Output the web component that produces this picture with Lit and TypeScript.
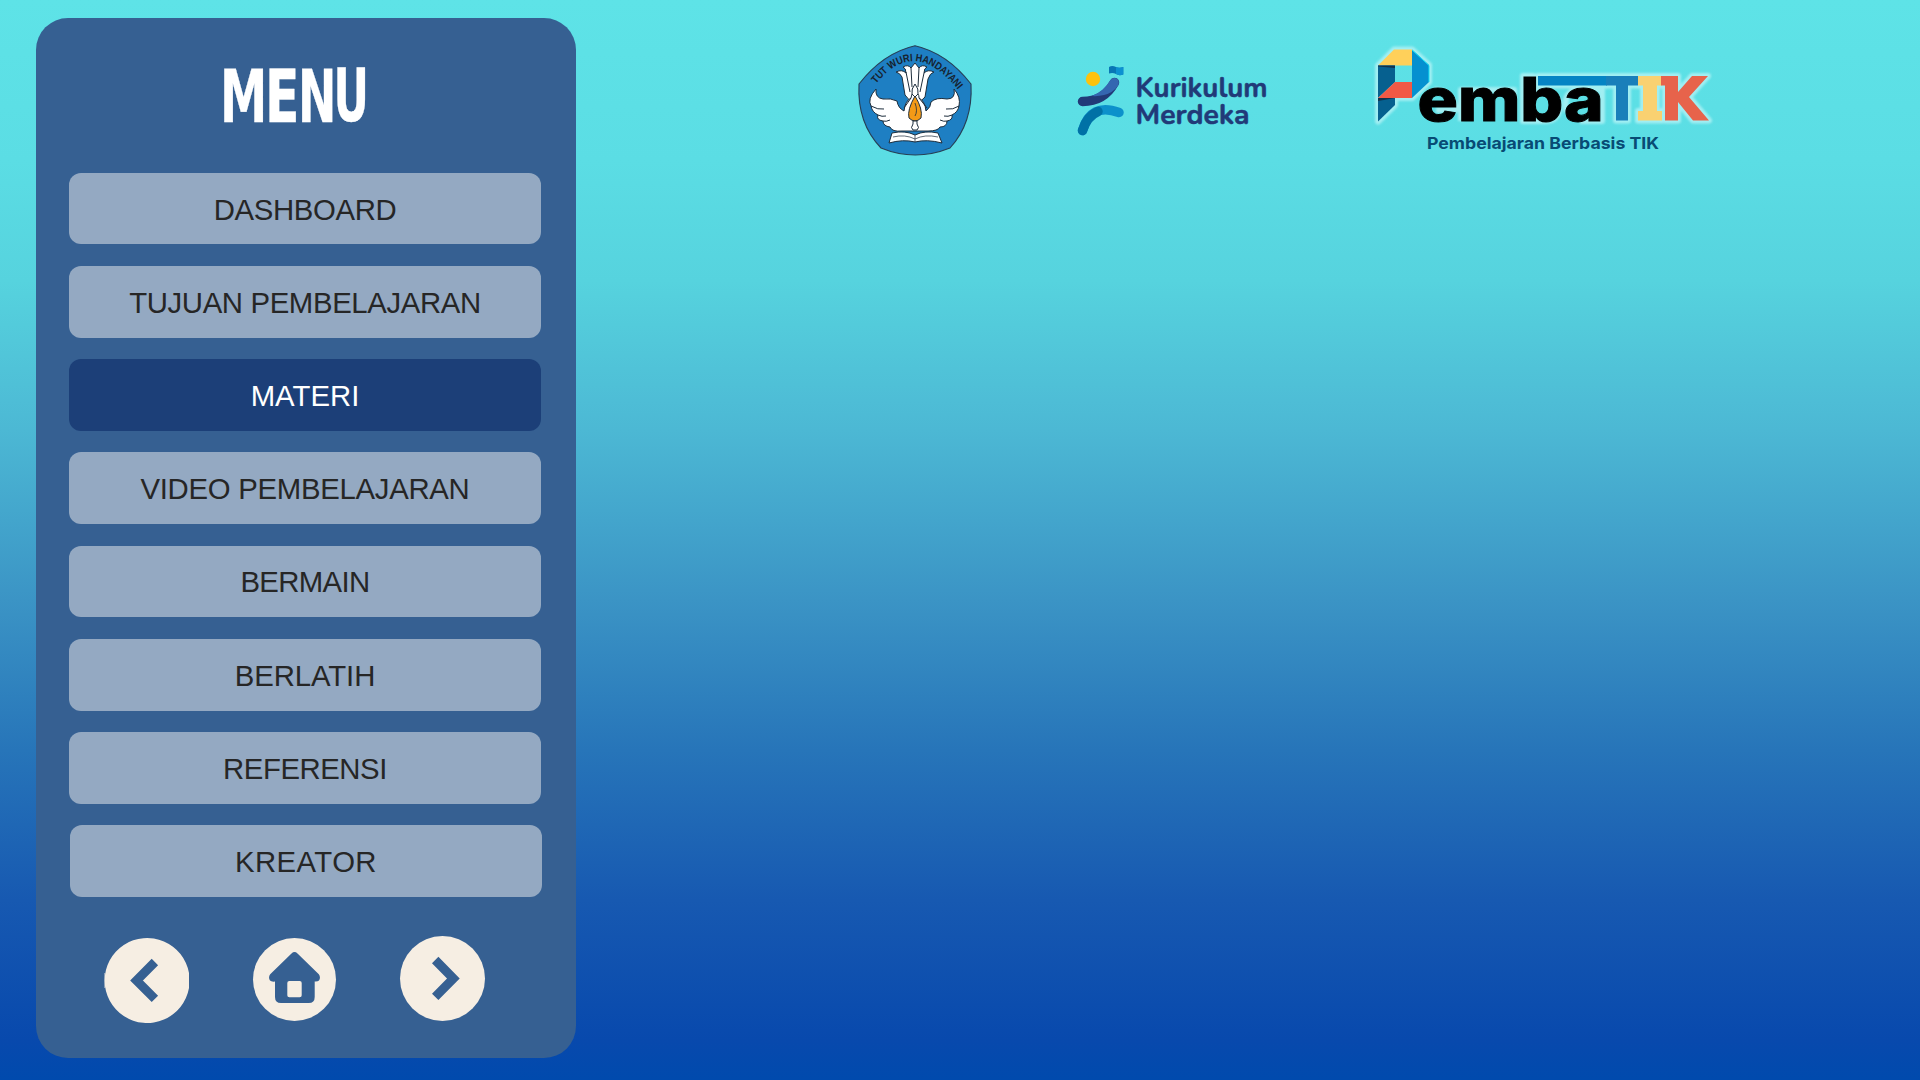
import { LitElement, html, css, svg } from "lit";
import { customElement } from "lit/decorators.js";
import { classMap } from "lit/directives/class-map.js";
import { styleMap } from "lit/directives/style-map.js";

interface MenuItem {
  label: string;
  tracking: number;
}

const ITEMS: MenuItem[] = [
  { label: "DASHBOARD", tracking: -0.35 },
  { label: "TUJUAN PEMBELAJARAN", tracking: -0.36 },
  { label: "MATERI", tracking: 0 },
  { label: "VIDEO PEMBELAJARAN", tracking: -0.28 },
  { label: "BERMAIN", tracking: -0.65 },
  { label: "BERLATIH", tracking: -0.1 },
  { label: "REFERENSI", tracking: -0.45 },
  { label: "KREATOR", tracking: 0.4 },
];
const ACTIVE = "MATERI";

@customElement("menu-panel")
class MenuPanel extends LitElement {
  static styles = css`
    :host { display: flex; flex-direction: column; width: 540px; height: 1040px; border-radius: 32px; background: #366092; font-family: "Liberation Sans", Arial, sans-serif; }
    .title { display: block; width: 540px; height: 154.6px; flex: none; }
    .title text { font-family: "DejaVu Sans", sans-serif; font-weight: 700; font-size: 74px; fill: #fff; stroke: #fff; stroke-width: .4; stroke-linejoin: round; }
    .list { display: flex; flex-direction: column; gap: 21.4px; padding-left: 33px; }
    .item { box-sizing: border-box; width: 472px; height: 71.85px; border: 0; border-radius: 12px; background: #94a9c2; color: #262626; font: 29.33px "Liberation Sans", Arial, sans-serif; padding: 2px 0 0; text-align: center; }
    .item.active { background: #1c3f78; color: #fff; }
    .item.last { margin-left: 1px; }
    .nav { display: block; width: 540px; height: 161px; flex: none; }
  `;
  render() {
    return html`
      <svg class="title" viewBox="36 18 540 154.6" aria-label="MENU">
        ${svg`
          <text transform="translate(220.1 121.6) scale(.642 .985)">M</text>
          <text transform="translate(265 121.6) scale(.682 .985)">E</text>
          <text transform="translate(298.1 121.6) scale(.62 .985)">N</text>
          <text transform="translate(333.5 121.1) scale(.59 .975)">U</text>`}
      </svg>
      <nav class="list">
        ${ITEMS.map(
          ({ label, tracking }) => html`<button
            class=${classMap({ item: true, active: label === ACTIVE, last: label === "KREATOR" })}
            style=${styleMap({ letterSpacing: `${tracking}px` })}
          >${label}</button>`
        )}
      </nav>
      <svg class="nav" viewBox="36 897 540 161">
        <g fill="#f6eee3">
          <path d="M189 973V988A42.5 42.5 0 1 1 189 973Z" />
          <path d="M104 973H105.5V988H104Z" opacity=".45" />
          <circle cx="294.5" cy="979.5" r="41.5" />
          <circle cx="442.5" cy="978.5" r="42.5" />
        </g>
        <g fill="none" stroke="#366092" stroke-width="9">
          <path d="M154.9 962L136.5 980.5L154.9 998.9" />
          <path d="M435.2 960L453.4 978.5L435.2 996.8" />
        </g>
        <path fill="#366092" fill-rule="evenodd" d="M291.5 953.5Q294.5 950.7 297.5 953.5L318.8 974.2Q321 977.4 319 980.5Q317.6 981.8 314.7 981.5V997Q314.7 1003 308.7 1003H281Q275 1003 275 997V981.5Q271.5 982 270 980.5Q268 977.4 270.2 974.2ZM289.3 981H299.7Q301.7 981 301.7 983V995.3Q301.7 997.3 299.7 997.3H289.3Q287.3 997.3 287.3 995.3V983Q287.3 981 289.3 981Z" />
      </svg>`;
  }
}

@customElement("brand-logos")
class BrandLogos extends LitElement {
  static styles = css`
    :host { display: flex; align-items: flex-start; gap: 60px; padding: 30px 0 0 264px; }
    svg { display: block; flex: none; }
    .motto { font: 700 10.6px "Liberation Sans", Arial, sans-serif; fill: #17222e; }
    .kurikulum { font: 700 27.3px "Nunito", "Open Sans", sans-serif; fill: #213a78; stroke: #213a78; stroke-width: .5; stroke-linejoin: round; }
    .word { font: 800 60px Inter, "Open Sans", sans-serif; stroke: #000; stroke-width: 1; }
    .sub { font: 700 16.5px Inter, sans-serif; fill: #084b74; }
    .halo { fill: none; stroke: #b9f4f7; stroke-width: 6; stroke-linejoin: round; opacity: .75; filter: blur(.9px); }
  `;
  render() {
    const pShape = "M1378 65.5L1394 49.5H1412L1429 65V82L1412 98H1395V105L1378 121.5Z";
    const bar = "M1538 76H1607V85.5H1538Z";
    const t = "M1606 76H1638V85.5H1628V120.5H1616V85.5H1606Z";
    const i = "M1638 76H1662V85.5H1657V111H1662V120.5H1638V111H1643V85.5H1638Z";
    const k = "M1661 76H1678V92L1692 76H1708L1689 97L1709 120.5H1693L1678 102V120.5H1665V85.5H1661Z";
    return html`
      <svg width="150" height="140" viewBox="0 0 150 140">
        <path d="M75 15.7Q107 23 131 54Q133 93 110 118Q75 132 41 118Q17 93 19 54Q43 23 75 15.7Z" fill="#1e7fc3" stroke="#273f55" stroke-width="1.1" />
        <defs><path id="arc" d="M36 54Q75 5 119 61" /></defs>
        <text class="motto"><textPath href="#arc" textLength="100" lengthAdjust="spacingAndGlyphs">TUT WURI HANDAYANI</textPath></text>
        <g fill="#fff" stroke="#1d2d3c" stroke-width="1" stroke-linejoin="round">
          <path d="M65 65L62 47Q60 43 56 42Q62 39 66 43Q66 38 63 37Q68 34 71 38L75 33L79 38Q82 34 87 37Q84 38 84 43Q88 39 94 42Q90 43 88 49L85 67Q75 80 65 65Z" />
          <path d="M66 42L70 62M71 38L72 57M79 38L78 57M84 43L80 62" fill="none" />
          <path d="M36 59Q27 69 31 76Q32 82 38 85Q36 90 43 91Q43 96 50 97Q52 102 62 101L75 101L88 101Q98 101 100 97Q107 97 107 91Q113 90 112 85Q118 82 119 76Q121 67 114 59Q116 69 107 69Q96 67 91 72Q91 77 86 81Q85 71 79 68Q79 65 78 64Q79 59 75 54Q71 59 72 64L71 68Q65 71 64 81Q58 78 57 71Q51 68 43 69Q35 68 36 59Z" />
          <path d="M31 76Q38 80 44 79M38 85Q42 87 46 86M43 91Q46 92 50 90M119 76Q113 80 106 79M112 85Q108 87 104 86M107 91Q104 92 100 90M72 64L75 67L78 64M71 68L64 78M79 68L87 78" fill="none" />
          <path d="M52 103Q65 100 75 105Q85 100 98 103L102 113Q87 109 75 112Q63 109 49 113Z" />
          <path d="M75 105V112M53 107Q65 104 75 109Q85 104 98 107" fill="none" stroke-width=".7" />
          <path d="M75 66Q67 80 69 88Q75 94 81 88Q83 79 75 66Z" fill="#f49a16" />
          <path d="M75 73Q78 81 75 86" fill="none" stroke-width=".8" />
          <path d="M73 91H77V94Q80 98 77 100H73Q70 98 73 94Z" />
        </g>
      </svg>
      <svg width="250" height="140" viewBox="1050 30 250 140">
        <circle cx="1093" cy="79" r="7.2" fill="#fdc20d" />
        <path d="M1109 67Q1112 65 1116 67Q1119 68.500 1123.300 67V74.500Q1119 76 1116 74Q1113 72.500 1109 73.500Z" fill="#0876b5" />
        <path d="M1116 67Q1119 68.500 1123.300 67V74.500Q1119 76 1116 74Z" fill="#0c91d1" />
        <path d="M1082.5 101.5Q1104 101.5 1114.5 82.5" fill="none" stroke="#213a78" stroke-width="9.5" stroke-linecap="round" />
        <path d="M1092 96Q1104 91 1110 80.5Q1113 76.5 1117.5 79Q1119.5 81.5 1118.5 85Q1113 93 1104 95Q1098 96.5 1092 96Z" fill="#3466b1" />
        <path d="M1082.5 130.5Q1091 102 1119 112.5" fill="none" stroke="#0c91cb" stroke-width="9.5" stroke-linecap="round" />
        <path d="M1082.5 130.5Q1087 116 1098 111.5" fill="none" stroke="#0071a6" stroke-width="9.5" stroke-linecap="round" />
        <text class="kurikulum" x="1135.5" y="97" textLength="132" lengthAdjust="spacingAndGlyphs">Kurikulum</text>
        <text class="kurikulum" x="1135.5" y="123.5" textLength="114" lengthAdjust="spacingAndGlyphs">Merdeka</text>
      </svg>
      <svg width="370" height="140" viewBox="1360 30 370 140">
        <g class="halo">
          <path d=${pShape} /><path d=${bar} /><path d=${t} /><path d=${i} /><path d=${k} />
          <path d="M1434 90Q1450 90 1455 106V110H1436M1461 121V90H1514V121M1523 121V76H1533V90Q1550 86 1559 102Q1561 121 1545 121ZM1567 112Q1561 90 1582 89H1602V121H1580" />
        </g>
        <path d="M1378 65.5L1394 49.5H1412V65.5Z" fill="#ffd05a" />
        <path d="M1412 49.5L1429 65V82L1412 98Z" fill="#0590d0" />
        <path d="M1378 65.5H1395V82L1378 98Z" fill="#06608f" />
        <path d="M1378 65.5H1395V68L1378 66.5Z" fill="#12314b" />
        <path d="M1395 82H1412V98H1378Z" fill="#f25945" />
        <path d="M1378 98H1395V105L1378 121.5Z" fill="#06608f" />
        <path d="M1378 98H1395L1378 101Z" fill="#12314b" />
        <path d="M1412 50L1429 65.5V82" fill="none" stroke="#16e2f5" stroke-width="1" />
        <text class="word" x="1417.5" y="120.5" textLength="186" lengthAdjust="spacingAndGlyphs">emba</text>
        <path d=${bar} fill="#0584c4" />
        <path d=${t} fill="#197fba" />
        <path d=${i} fill="#f9d171" />
        <path d=${k} fill="#e7634b" />
        <text class="sub" x="1427" y="148.5" textLength="232" lengthAdjust="spacingAndGlyphs">Pembelajaran Berbasis TIK</text>
      </svg>`;
  }
}

@customElement("app-root")
class AppRoot extends LitElement {
  static styles = css`
    :host { display: flex; align-items: flex-start; box-sizing: border-box; width: 1920px; height: 1080px; padding: 18px 0 0 36px; overflow: hidden; background: linear-gradient(180deg, #5ee3e7 0, #5bdde4 160px, #56d3de 280px, #4cb8d4 430px, #3b94c5 600px, #2775b9 750px, #1759b1 900px, #0849ad 1040px, #004aad 1080px); }
    .logos { margin-top: -18px; }
  `;
  render() {
    return html`<menu-panel></menu-panel><brand-logos class="logos"></brand-logos>`;
  }
}
